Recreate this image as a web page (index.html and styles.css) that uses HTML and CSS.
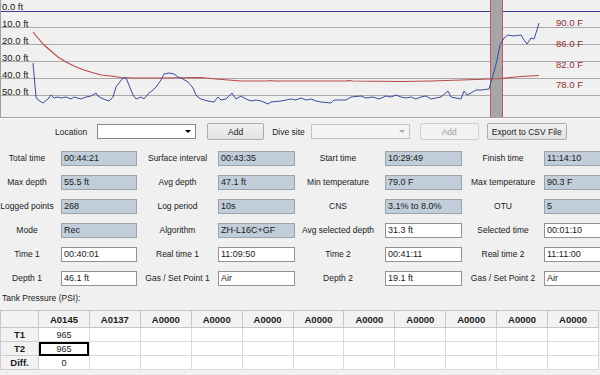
FILE: index.html
```html
<!DOCTYPE html>
<html lang="en">
<head>
    <meta charset="UTF-8">
    <title>Dive Log</title>
    <link rel="stylesheet" href="styles.css">
</head>
<body>
    <div class="chart">
        <svg width="600" height="117" viewBox="0 0 600 117">
            <line class="grid zero" x1="0" y1="11.5" x2="600" y2="11.5"/>
            <line class="grid" x1="0" y1="27.5" x2="600" y2="27.5"/>
            <line class="grid" x1="0" y1="44.5" x2="600" y2="44.5"/>
            <line class="grid" x1="0" y1="61.5" x2="600" y2="61.5"/>
            <line class="grid" x1="0" y1="78.5" x2="600" y2="78.5"/>
            <line class="grid" x1="0" y1="95.5" x2="600" y2="95.5"/>

            <rect class="selection" x="489" y="0" width="12" height="117"/>
            <line class="selEdge" x1="489.5" y1="0" x2="489.5" y2="117"/>
            <line class="selEdge" x1="501.5" y1="0" x2="501.5" y2="117"/>

            <polyline class="temp" points="32,32 37,38 43,45 50,51 57,57 65,62 73,66 83,70 93,73 100,75 110,76 120,77.5 133,78 160,78 200,77.5 215,79 240,81 267,81 270,80.5 273,81 300,81 345,81 348,80.5 352,81 400,81.5 430,81 460,80 490,79 500,78.5 520,76.5 538,75.5"/>
            <polyline class="depth" points="32,63 35,97 37,100 42,103 47,99 50,95 53,98 57,97 60,98 65,97 70,99 73,97 80,99 85,97 90,96 95,93 97,96 100,98 105,100 108,101 112,97 115,87 118,83 122,78 125,78 128,85 132,95 135,99 140,97 143,99 147,94 152,90 155,87 160,80 163,74 168,73 173,74 177,77 182,79 187,82 192,88 195,95 198,98 200,99 207,101 213,102 217,97 220,100 225,99 231,93 235,99 240,96 245,99 250,101 255,100 260,101 267,104 270,102 280,101 290,99 295,100 300,98 305,100 310,99 315,101 320,102 330,103 333,100 345,100 350,97 360,96 365,98 372,97 378,99 385,96 390,97 395,95 400,97 405,98 410,97 415,99 420,97 425,96 430,99 440,97 447,91 450,97 455,98 460,99 463,91 466,95 470,93 475,90 480,90 488,89 490,82 493,72 496,60 499,45 503,38 507,35 512,36 520,35 523,40 526,44 530,38 533,39 536,30 538,23"/>

            <text class="axis" x="1" y="10">0.0 ft</text>
            <text class="axis" x="1" y="27">10.0 ft</text>
            <text class="axis" x="1" y="44">20.0 ft</text>
            <text class="axis" x="1" y="61">30.0 ft</text>
            <text class="axis" x="1" y="78">40.0 ft</text>
            <text class="axis" x="1" y="95">50.0 ft</text>

            <text class="axisTemp" x="555" y="26">90.0 F</text>
            <text class="axisTemp" x="555" y="47">86.0 F</text>
            <text class="axisTemp" x="555" y="68">82.0 F</text>
            <text class="axisTemp" x="555" y="88">78.0 F</text>
        </svg>
    </div>

    <div class="toolbar">
        <span class="toolLabel locLabel">Location</span>
        <div class="combo"><span class="arrow"></span></div>
        <button class="btn addLoc">Add</button>
        <span class="toolLabel siteLabel">Dive site</span>
        <div class="combo disabled"><span class="arrow"></span></div>
        <button class="btn addSite" disabled>Add</button>
        <button class="btn export">Export to CSV File</button>
    </div>

    <div class="fields">
        <span class="lbl first">Total time</span>
        <div class="box ro">00:44:21</div>
        <span class="lbl">Surface interval</span>
        <div class="box ro">00:43:35</div>
        <span class="lbl third">Start time</span>
        <div class="box ro">10:29:49</div>
        <span class="lbl">Finish time</span>
        <div class="box ro">11:14:10</div>

        <span class="lbl first">Max depth</span>
        <div class="box ro">55.5 ft</div>
        <span class="lbl">Avg depth</span>
        <div class="box ro">47.1 ft</div>
        <span class="lbl third">Min temperature</span>
        <div class="box ro">79.0 F</div>
        <span class="lbl">Max temperature</span>
        <div class="box ro">90.3 F</div>

        <span class="lbl first">Logged points</span>
        <div class="box ro">268</div>
        <span class="lbl">Log period</span>
        <div class="box ro">10s</div>
        <span class="lbl third">CNS</span>
        <div class="box ro">3.1% to 8.0%</div>
        <span class="lbl">OTU</span>
        <div class="box ro">5</div>

        <span class="lbl first">Mode</span>
        <div class="box ro">Rec</div>
        <span class="lbl">Algorithm</span>
        <div class="box ro">ZH-L16C+GF</div>
        <span class="lbl third">Avg selected depth</span>
        <div class="box">31.3 ft</div>
        <span class="lbl">Selected time</span>
        <div class="box">00:01:10</div>

        <span class="lbl first">Time 1</span>
        <div class="box">00:40:01</div>
        <span class="lbl">Real time 1</span>
        <div class="box">11:09:50</div>
        <span class="lbl third">Time 2</span>
        <div class="box">00:41:11</div>
        <span class="lbl">Real time 2</span>
        <div class="box">11:11:00</div>

        <span class="lbl first">Depth 1</span>
        <div class="box">46.1 ft</div>
        <span class="lbl">Gas / Set Point 1</span>
        <div class="box">Air</div>
        <span class="lbl third">Depth 2</span>
        <div class="box">19.1 ft</div>
        <span class="lbl">Gas / Set Point 2</span>
        <div class="box">Air</div>
    </div>

    <div class="caption">Tank Pressure (PSI):</div>

    <table class="tanks">
        <colgroup>
            <col class="rowHeadCol">
            <col span="11">
        </colgroup>
        <tr class="head">
            <th></th>
            <th>A0145</th><th>A0137</th><th>A0000</th><th>A0000</th><th>A0000</th><th>A0000</th>
            <th>A0000</th><th>A0000</th><th>A0000</th><th>A0000</th><th>A0000</th>
        </tr>
        <tr>
            <th>T1</th>
            <td>965</td><td></td><td></td><td></td><td></td><td></td><td></td><td></td><td></td><td></td><td></td>
        </tr>
        <tr>
            <th>T2</th>
            <td class="selected">965</td><td></td><td></td><td></td><td></td><td></td><td></td><td></td><td></td><td></td><td></td>
        </tr>
        <tr>
            <th>Diff.</th>
            <td>0</td><td></td><td></td><td></td><td></td><td></td><td></td><td></td><td></td><td></td><td></td>
        </tr>
    </table>
</body>
</html>
```

FILE: styles.css
```css
body {
    margin: 0;
    width: 600px;
    height: 375px;
    overflow: hidden;
    background-color: #f0f0f0;
    font-family: 'Liberation Sans', Arial, sans-serif;
    color: #1a1a1a;
}

/* chart */

.chart {
    height: 117px;
    border-left: 1px solid #a0a0a0;
    border-bottom: 1px solid #a0a0a0;
    box-shadow: 0 1px 0 #fff;
    overflow: hidden;
}

.chart svg {
    display: block;
}

.grid {
    stroke: #a9a9a9;
    stroke-width: 1;
}

.grid.zero {
    stroke: #3b3f9a;
}

.selection {
    fill: #a6a6a6;
}

.selEdge {
    stroke: #c05a5a;
    stroke-width: 1;
}

.temp {
    fill: none;
    stroke: #b84848;
    stroke-width: 1.1;
}

.depth {
    fill: none;
    stroke: #3a4b9e;
    stroke-width: 1;
}

.axis {
    font-size: 9.5px;
    fill: #1a1a1a;
}

.axisTemp {
    font-size: 9.5px;
    fill: #8e2f2f;
}

/* toolbar */

.toolbar {
    display: flex;
    align-items: center;
    height: 17px;
    margin-top: 5px;
    font-size: 8.5px;
}

.toolLabel {
    white-space: nowrap;
}

.locLabel {
    margin-left: 55px;
    margin-right: 10px;
}

.siteLabel {
    margin-left: 8px;
    margin-right: 6px;
}

.combo {
    position: relative;
    width: 97px;
    height: 13px;
    background-color: #fff;
    border: 1px solid #828790;
}

.combo .arrow {
    position: absolute;
    right: 4px;
    top: 5px;
    border-left: 3px solid transparent;
    border-right: 3px solid transparent;
    border-top: 3px solid #000;
}

.combo.disabled {
    background-color: #f4f4f4;
    border-color: #c3c3c3;
}

.combo.disabled .arrow {
    border-top-color: #a8a8a8;
}

.btn {
    height: 17px;
    padding: 0;
    font-family: inherit;
    font-size: 8.5px;
    color: #1a1a1a;
    background: linear-gradient(#f1f1f1, #e2e2e2);
    border: 1px solid #acacac;
    border-radius: 2px;
}

.addLoc {
    width: 57px;
    margin-left: 11px;
}

.addSite {
    width: 59px;
    margin-left: 10px;
    color: #a3a3a3;
    background: #f1f1f1;
    border-color: #cfcfcf;
}

.export {
    width: 80px;
    margin-left: 8px;
}

/* fields */

.fields {
    display: grid;
    grid-template-columns: 61px 76px 81px 77px 90px 77px 82px 77px;
    grid-auto-rows: 15px;
    row-gap: 9px;
    margin-top: 11px;
    width: 621px;
}

.lbl {
    font-size: 8.5px;
    line-height: 15px;
    text-align: center;
    white-space: nowrap;
}

.lbl.first {
    padding-right: 7px;
}

.lbl.third {
    padding-right: 4px;
}

.box {
    box-sizing: border-box;
    height: 15px;
    padding-left: 2px;
    font-size: 9px;
    line-height: 13px;
    background-color: #fff;
    border: 1px solid #8f9399;
    white-space: nowrap;
}

.box.ro {
    background-color: #c1cdd9;
    border-color: #98a3ae;
}

/* tank table */

.caption {
    margin-top: 6px;
    padding-left: 2px;
    font-size: 8.5px;
    line-height: 12px;
}

.tanks {
    margin-top: 6px;
    width: 599px;
    table-layout: fixed;
    border-collapse: collapse;
    font-size: 9px;
}

.rowHeadCol {
    width: 38px;
}

.tanks th,
.tanks td {
    padding: 0;
    height: 13px;
    text-align: center;
    border: 1px solid #cdcdcd;
}

.tanks th {
    font-size: 9.5px;
    background-color: #f2f2f2;
}

.tanks td {
    background-color: #fff;
    border-color: #dadada;
}

.tanks tr.head th {
    height: 16px;
    border-color: #c6c6c6;
}

.tanks td.selected {
    outline: 2px solid #000;
    outline-offset: -2px;
}
```
